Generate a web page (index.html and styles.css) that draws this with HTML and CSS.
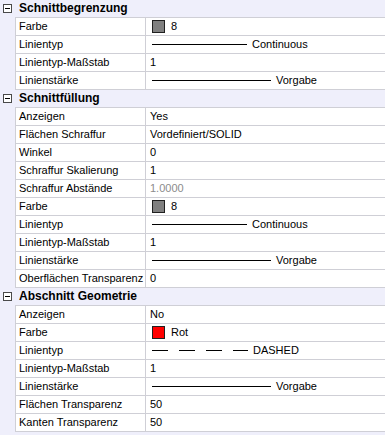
FILE: index.html
```html
<!DOCTYPE html>
<html lang="de">
<head>
    <meta charset="UTF-8">
    <title>Eigenschaften</title>
    <link rel="stylesheet" href="styles.css">
</head>
<body>
    <div class="props">
        <div class="group">
            <span class="gutter"><span class="toggle"></span></span>
            <span class="group-title">Schnittbegrenzung</span>
        </div>
        <div class="row">
            <span class="gutter"></span>
            <span class="label">Farbe</span>
            <span class="value"><span class="swatch gray"></span>8</span>
        </div>
        <div class="row">
            <span class="gutter"></span>
            <span class="label">Linientyp</span>
            <span class="value"><span class="line w95"></span>Continuous</span>
        </div>
        <div class="row">
            <span class="gutter"></span>
            <span class="label">Linientyp-Maßstab</span>
            <span class="value">1</span>
        </div>
        <div class="row">
            <span class="gutter"></span>
            <span class="label">Linienstärke</span>
            <span class="value"><span class="line w119"></span>Vorgabe</span>
        </div>

        <div class="group">
            <span class="gutter"><span class="toggle"></span></span>
            <span class="group-title">Schnittfüllung</span>
        </div>
        <div class="row">
            <span class="gutter"></span>
            <span class="label">Anzeigen</span>
            <span class="value">Yes</span>
        </div>
        <div class="row">
            <span class="gutter"></span>
            <span class="label">Flächen Schraffur</span>
            <span class="value">Vordefiniert/SOLID</span>
        </div>
        <div class="row">
            <span class="gutter"></span>
            <span class="label">Winkel</span>
            <span class="value">0</span>
        </div>
        <div class="row">
            <span class="gutter"></span>
            <span class="label">Schraffur Skalierung</span>
            <span class="value">1</span>
        </div>
        <div class="row">
            <span class="gutter"></span>
            <span class="label">Schraffur Abstände</span>
            <span class="value muted">1.0000</span>
        </div>
        <div class="row">
            <span class="gutter"></span>
            <span class="label">Farbe</span>
            <span class="value"><span class="swatch gray"></span>8</span>
        </div>
        <div class="row">
            <span class="gutter"></span>
            <span class="label">Linientyp</span>
            <span class="value"><span class="line w95"></span>Continuous</span>
        </div>
        <div class="row">
            <span class="gutter"></span>
            <span class="label">Linientyp-Maßstab</span>
            <span class="value">1</span>
        </div>
        <div class="row">
            <span class="gutter"></span>
            <span class="label">Linienstärke</span>
            <span class="value"><span class="line w119"></span>Vorgabe</span>
        </div>
        <div class="row">
            <span class="gutter"></span>
            <span class="label">Oberflächen Transparenz</span>
            <span class="value">0</span>
        </div>

        <div class="group">
            <span class="gutter"><span class="toggle"></span></span>
            <span class="group-title">Abschnitt Geometrie</span>
        </div>
        <div class="row">
            <span class="gutter"></span>
            <span class="label">Anzeigen</span>
            <span class="value">No</span>
        </div>
        <div class="row">
            <span class="gutter"></span>
            <span class="label">Farbe</span>
            <span class="value"><span class="swatch red"></span>Rot</span>
        </div>
        <div class="row">
            <span class="gutter"></span>
            <span class="label">Linientyp</span>
            <span class="value"><span class="line dashed"></span>DASHED</span>
        </div>
        <div class="row">
            <span class="gutter"></span>
            <span class="label">Linientyp-Maßstab</span>
            <span class="value">1</span>
        </div>
        <div class="row">
            <span class="gutter"></span>
            <span class="label">Linienstärke</span>
            <span class="value"><span class="line w119"></span>Vorgabe</span>
        </div>
        <div class="row">
            <span class="gutter"></span>
            <span class="label">Flächen Transparenz</span>
            <span class="value">50</span>
        </div>
        <div class="row">
            <span class="gutter"></span>
            <span class="label">Kanten Transparenz</span>
            <span class="value">50</span>
        </div>
    </div>
</body>
</html>
```

FILE: styles.css
```css
body {
    margin: 0;
    background: #efeffb;
    font-family: "Liberation Sans", Arial, sans-serif;
    font-size: 11px;
    color: #000;
}

.props {
    width: 385px;
    height: 435px;
    background: #efeffb;
}

.group,
.row {
    display: flex;
    height: 18px;
}

.gutter {
    width: 15px;
    flex: none;
    position: relative;
}

/* boxed minus sign */
.toggle {
    position: absolute;
    left: 3px;
    top: 4px;
    width: 7px;
    height: 7px;
    border: 1px solid #4a4a4a;
    background: #fff;
}

.toggle::after {
    content: "";
    position: absolute;
    left: 1px;
    top: 3px;
    width: 5px;
    height: 1px;
    background: #000;
}

.group-title {
    flex: 1;
    padding-left: 4px;
    font-size: 12px;
    font-weight: bold;
    line-height: 17px;
    border-bottom: 1px solid #cfcfd6;
}

.label,
.value {
    background: #fff;
    line-height: 17px;
    border-bottom: 1px solid #cfcfd6;
    white-space: nowrap;
    overflow: hidden;
}

.label {
    width: 126px;
    flex: none;
    padding-left: 3px;
    border-left: 1px solid #cfcfd6;
    border-right: 1px solid #cfcfd6;
}

.value {
    flex: 1;
    padding-left: 4px;
    display: flex;
    align-items: center;
}

.muted {
    color: #8c8c8c;
}

.swatch {
    width: 11px;
    height: 11px;
    border: 1px solid #202020;
    margin: 0 6px 0 2px;
}

.swatch.gray {
    background: #808080;
}

.swatch.red {
    background: #ff0000;
}

.line {
    height: 1px;
    background: #000;
    margin: 0 5px 0 2px;
}

.line.w95 {
    width: 95px;
}

.line.w119 {
    width: 119px;
}

.line.dashed {
    width: 96px;
    background: repeating-linear-gradient(to right, #000 0 16px, transparent 16px 27px);
}
```
